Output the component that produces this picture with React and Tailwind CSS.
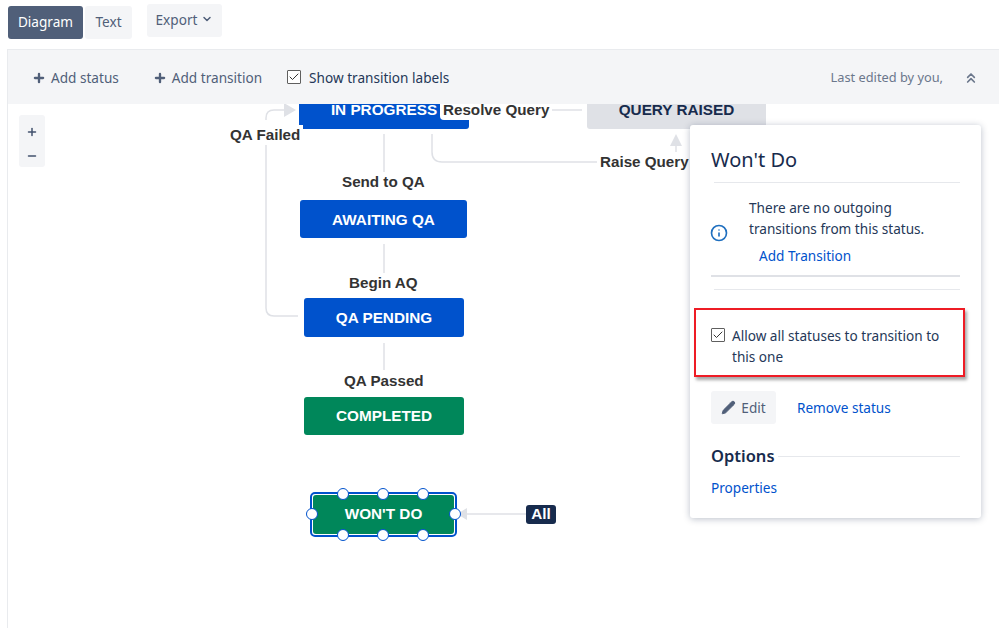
import { Plus, Minus, ChevronDown, ChevronsUp, Info, Pencil, Check } from 'lucide-react';

const NODES = [
  { label: 'IN PROGRESS', cls: 'left-[291px] top-[-14px] w-[170px] h-[39px] pt-[2px] bg-[#0052cc] text-white' },
  { label: 'QUERY RAISED', cls: 'left-[579px] top-[-14px] w-[179px] h-[39px] pt-[2px] bg-[#dfe1e6] text-[#172b4d]' },
  { label: 'AWAITING QA', cls: 'left-[292px] top-[96px] w-[167px] h-[38px] pt-[2px] bg-[#0052cc] text-white' },
  { label: 'QA PENDING', cls: 'left-[296px] top-[194px] w-[160px] h-[39px] pt-[2px] bg-[#0052cc] text-white' },
  { label: 'COMPLETED', cls: 'left-[296px] top-[293px] w-[160px] h-[38px] pt-[1px] bg-[#00875a] text-white' },
];

const LABELS = [
  { label: 'Resolve Query', cls: 'left-[432px] top-[-4px] rounded-bl-[4px] px-[3px] bg-white' },
  { label: 'QA Failed', cls: 'left-[219px] top-[21px] px-[3px] bg-white' },
  { label: 'Raise Query', cls: 'left-[589px] top-[48px] px-[3px] bg-white' },
  { label: 'Send to QA', cls: 'left-[334px] top-[68px]' },
  { label: 'Begin AQ', cls: 'left-[341px] top-[169px]' },
  { label: 'QA Passed', cls: 'left-[336px] top-[267px]' },
];

const HANDLES = [
  'left-[329px] top-[384px]', 'left-[369px] top-[384px]', 'left-[409px] top-[384px]',
  'left-[329px] top-[425px]', 'left-[369px] top-[425px]', 'left-[409px] top-[425px]',
  'left-[298px] top-[404px]', 'left-[441px] top-[404px]',
];

function Checkbox() {
  return (
    <span className="flex h-[14px] w-[14px] shrink-0 items-center justify-center rounded-[1px] border border-[#5f5f5f] bg-white">
      <Check size={12} strokeWidth={2} className="text-[#333]" />
    </span>
  );
}

function Connectors() {
  return (
    <svg className="absolute left-0 top-0" width="991" height="524" fill="none" stroke="#dfe1e6" strokeWidth="1.5">
      <path d="M376 30V68M376 140V169M376 239V266" />
      <path d="M290 212H266Q258 212 258 204V38M258 16V14Q258 6 266 6H276" />
      <path d="M424 30V48Q424 58 434 58H589" />
      <path d="M544 6H574" />
      <path d="M668 58V40" />
      <path d="M518 410H456" />
      <path d="M276 -1L288 6L276 13Z" fill="#dfe1e6" stroke="none" />
      <path d="M662 42L668 30L674 42Z" fill="#dfe1e6" stroke="none" />
      <path d="M459 410L449 416V404Z" fill="#dfe1e6" stroke="none" transform="rotate(180 454 410)" />
    </svg>
  );
}

function Popup() {
  return (
    <div className="absolute left-[682px] top-[21px] h-[393px] w-[291px] rounded-[3px] bg-white px-[21px] text-[13.6px] leading-[21px] text-[#253858] shadow-[0_1px_7px_rgba(9,30,66,0.28)]">
      <h2 className="pt-[22px] text-[20px] leading-[26px] text-[#172b4d]">Won't Do</h2>
      <div className="ml-[3px] mt-[9px] h-px bg-[#e6e8ec]" />
      <div className="mt-[14px] flex items-center">
        <Info size={18} strokeWidth={2.2} className="-ml-[1px] mt-[2px] shrink-0 text-[#1f6fbf]" />
        <div className="ml-[21px]">
          <p>There are no outgoing<br />transitions from this status.</p>
          <a className="ml-[10px] mt-[6px] block text-[#0052cc]">Add Transition</a>
        </div>
      </div>
      <div className="mt-[9px] h-[2px] bg-[#dfe1e6]" />
      <div className="ml-[3px] mt-[12px] h-px bg-[#e6e8ec]" />

      <div className="relative -mx-[17px] mt-[18px] flex h-[69px] w-[271px] items-start gap-[7px] border-2 border-[#ee1c25] pl-[15px] pt-[15px] shadow-[2px_3px_3px_rgba(0,0,0,0.35)]">
        <span className="mt-[3px]"><Checkbox /></span>
        <span>Allow all statuses to transition to<br />this one</span>
      </div>

      <div className="mt-[14px] flex items-center">
        <button className="flex h-[33px] w-[65px] items-center justify-center gap-[5px] rounded-[3px] bg-[#f4f5f7] text-[#505f79]">
          <Pencil size={15} fill="#505f79" strokeWidth={1.5} />
          Edit
        </button>
        <a className="ml-[21px] text-[#0052cc]">Remove status</a>
      </div>

      <div className="mt-[21px] flex items-center">
        <span className="text-[16.5px] font-semibold leading-[22px] text-[#172b4d]">Options</span>
        <span className="ml-[3px] h-px flex-1 bg-[#e6e8ec]" />
      </div>
      <a className="mt-[10px] block text-[#0052cc]">Properties</a>
    </div>
  );
}

export default function App() {
  return (
    <div className="h-[628px] w-[999px] overflow-hidden bg-white font-['Noto_Sans','Open_Sans',sans-serif] text-[13.6px] text-[#505f79]">
      <div className="flex h-[49px] items-start pl-[8px]">
        <button className="mt-[6px] h-[33px] w-[75px] rounded-[3px] bg-[#505f79] text-white">Diagram</button>
        <button className="ml-[2px] mt-[6px] h-[33px] w-[47px] rounded-[3px] bg-[#f4f5f7]">Text</button>
        <button className="ml-[15px] mt-[4px] flex h-[33px] w-[75px] items-center justify-center gap-[4px] rounded-[3px] bg-[#f4f5f7]">
          Export
          <ChevronDown size={12} strokeWidth={3} className="mb-[3px]" />
        </button>
      </div>

      <div className="ml-[7px] flex h-[579px] flex-col border-l border-t border-[#e9ebee]">
        <div className="relative z-10 flex h-[54px] shrink-0 items-center bg-[#f4f5f7] pl-[24px] pr-[20px] pt-[2px]">
          <Plus size={14} strokeWidth={4} className="text-[#505f79]" />
          <span className="ml-[5px]">Add status</span>
          <Plus size={14} strokeWidth={4} className="ml-[34px] text-[#505f79]" />
          <span className="ml-[5px]">Add transition</span>
          <span className="mb-[2px] ml-[25px]"><Checkbox /></span>
          <span className="ml-[8px] text-[#253858]">Show transition labels</span>
          <span className="ml-auto text-[12.8px] text-[#6b778c]">Last edited by you,</span>
          <ChevronsUp size={16} strokeWidth={2.5} className="ml-[20px] text-[#6b778c]" />
        </div>

        <div className="relative flex-1 bg-white font-['Liberation_Sans',sans-serif]">
          <Connectors />

          <div className="absolute left-[11px] top-[11px] flex h-[52px] w-[26px] flex-col items-center gap-[12px] rounded-[3px] bg-[#f4f5f7] pt-[11px] text-[#42526e]">
            <Plus size={12} strokeWidth={3} />
            <Minus size={12} strokeWidth={3} />
          </div>

          {NODES.map(n => (
            <div key={n.label} className={`absolute flex items-center justify-center rounded-[3px] text-[15.3px] font-bold ${n.cls}`}>
              {n.label}
            </div>
          ))}

          {LABELS.map(l => (
            <span key={l.label} className={`absolute text-[15.2px] font-bold leading-[20px] text-[#333] ${l.cls}`}>
              {l.label}
            </span>
          ))}

          <div className="absolute left-[302px] top-[388px] flex h-[45px] w-[147px] rounded-[5px] border-2 border-[#0052cc] bg-white p-px">
            <div className="flex flex-1 items-center justify-center rounded-[3px] bg-[#00875a] text-[15.3px] font-bold text-white">WON'T DO</div>
          </div>
          {HANDLES.map(h => (
            <span key={h} className={`absolute h-[12px] w-[12px] rounded-full border-[1.5px] border-[#0052cc] bg-white ${h}`} />
          ))}

          <span className="absolute left-[518px] top-[401px] flex h-[19px] w-[30px] items-center justify-center rounded-[3px] bg-[#172b4d] text-[15.3px] font-bold text-white">All</span>

          <div className="font-['Noto_Sans','Open_Sans',sans-serif]">
            <Popup />
          </div>
        </div>
      </div>
    </div>
  );
}
